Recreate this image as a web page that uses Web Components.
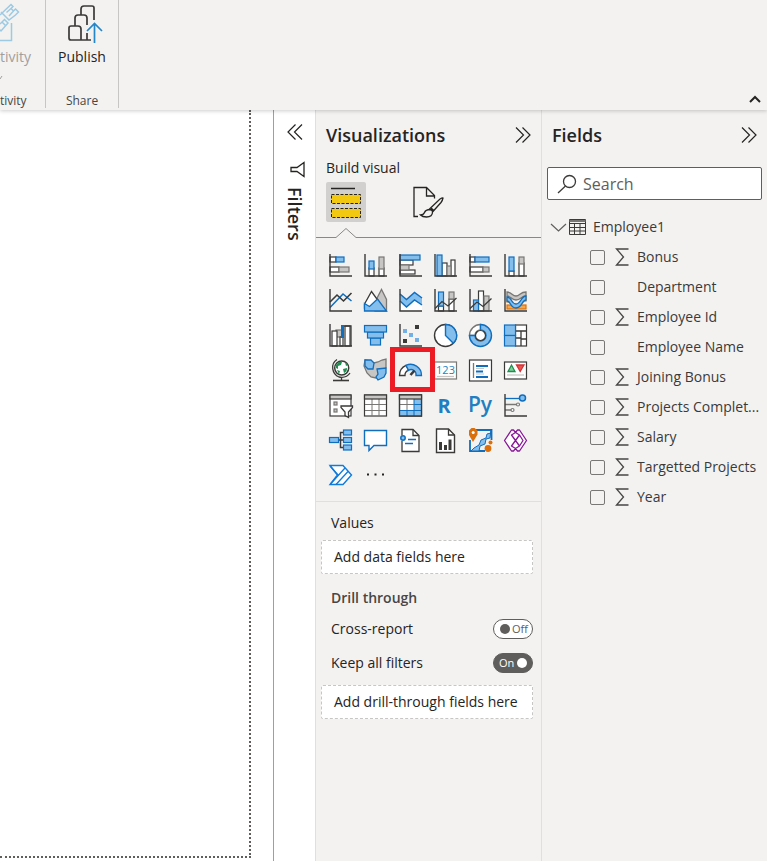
<!DOCTYPE html>
<html lang="en">
<head>
<meta charset="utf-8">
<title>Report editor</title>
<style>
html, body { height: 100%; }
body { margin: 0; font: 14px/20px "Open Sans", "Noto Sans", sans-serif; color: #252423; background: #fff; }
</style>
</head>
<body>
<report-editor></report-editor>
<script>
const define = (name, html, setup) => {
  const t = document.createElement('template');
  t.innerHTML = `<style>
    *{box-sizing:border-box}
    button{font:inherit;color:inherit;background:none;border:0;padding:0;margin:0;display:block}
    h2,h3,p{margin:0;font-weight:inherit;font-size:inherit}
    svg{display:block;overflow:visible;fill:none}
  </style>` + html;
  customElements.define(name, class extends HTMLElement {
    constructor() {
      super();
      this.attachShadow({ mode: 'open' }).append(t.content.cloneNode(true));
    }
    connectedCallback() { if (setup) setup(this.shadowRoot, this); }
  });
};

/* Palette shared by the visual icons */
const D = '#3b3a39', G = '#797775', B = '#106ebe', F = '#83beec', GF = '#c8c6c4';
const axis = `<path d="M2 1v22h22" stroke="${D}" stroke-width="1.4"/>`;
const r = (x, y, w, h, f = '#fff', s = D) => `<rect x="${x}" y="${y}" width="${w}" height="${h}" fill="${f}" stroke="${s}" stroke-width="1.2"/>`;
const blue = (x, y, w, h) => r(x, y, w, h, F, B);
const grey = (x, y, w, h) => r(x, y, w, h, GF, G);
const p = (d, s = D, f = 'none', w = 1.3) => `<path d="${d}" stroke="${s}" fill="${f}" stroke-width="${w}"/>`;
const c = (x, y, q, s = D, f = 'none', w = 1.2) => `<circle cx="${x}" cy="${y}" r="${q}" stroke="${s}" fill="${f}" stroke-width="${w}"/>`;
const sq = (x, y, f) => `<rect x="${x - 2}" y="${y - 2}" width="4" height="4" fill="${f}"/>`;
const O = '#d9700d', P = '#881798', A = '#0f7bdc';

const visuals = [
  ['Stacked bar chart', r(2,4,6,5)+blue(8,4,8,5)+r(2,14,9,5)+grey(11,14,10,5)+axis],
  ['Stacked column chart', r(6,15,5,8)+blue(6,8,5,8)+r(16,15,5,8)+grey(16,4,5,12)+axis],
  ['Clustered bar chart', r(2,7,13,5)+r(2,17,15,4)+grey(2,12,9,5)+blue(2,2,20,5)+axis],
  ['Clustered column chart', r(9,10,5,13)+r(18,7,4,16)+grey(14,13,4,10)+blue(4,2,5,21)+axis],
  ['100% stacked bar chart', r(2,4,5,5)+blue(7,4,14,5)+r(2,14,13,5)+grey(15,14,6,5)+axis],
  ['100% stacked column chart', r(6,18,5,5)+blue(6,4,5,14)+r(16,10,5,13)+grey(16,4,5,7)+axis],

  ['Line chart', p('M2 19.5L15 6l8.5 7',B,'none',1.5)+p('M2 14L9 7l6.500 6L23.500 5',D,'none',1.6)+axis],
  ['Area chart', p('M12 14l6.500-12.500 5 10V23H12z',G,GF)+p('M1.500 16L8.500 3.500l8 11V20h-15z',D,'#fff')+p('M1.500 15.500l5 3 8-7.500 9 12h-22z',B,F)],
  ['Stacked area chart', p('M2 13l6.500 6L16.500 12 24 17v6H2z','none','#fff')+p('M2 6l6.500 5.500 8-7L24 10v7l-7.500-5-8 7L2 13z','none',F)+p('M2 6l6.500 5.500 8-7L24 10M2 13l6.500 6 8-7L24 17',B,'none',1.5)+axis],
  ['Line and stacked column chart', r(5.5,18,5,5)+blue(5.5,4,5,14)+r(16,11,5,12)+grey(16,4,5,7)+p('M2 20.500L9 13.500l6 4.500 8.500-8')+axis],
  ['Line and clustered column chart', r(10.5,3,5,20)+grey(16,8,5,15)+blue(5.5,12,5,11)+p('M2 20.500L9 14l6 4.500 8.500-8')+axis],
  ['Ribbon chart', r(4,10,4,4,'#f7a548',O)+r(19,9,4,4,'#f7a548',O)+r(4,17,19,4,'#f7a548',O)+p('M4 4c5 0 5 4 9 4s4-4 10-4v4c-5 0-5 4-10 4s-5-4-9-4z',G,GF)+p('M4 9c5 0 4 7 9 7s5-8 10-8v4c-4 0-4 8-10 8S8 13 4 13z',B,F)+axis],

  ['Waterfall chart', grey(8,7,6,7)+r(4,8,5,15)+r(12,14,3,9)+r(17,3,5,20)+`<path d="M13 2h3v13h-3z" fill="${B}"/>`+p('M16 3h7v20')+axis],
  ['Funnel', blue(7.5,15,10,7)+blue(4.5,9,16,6)+blue(1.5,2.5,22,6.5)],
  ['Scatter chart', sq(19,4,D)+sq(7,8,'#71afe5')+sq(13,12,'#71afe5')+sq(7,18,D)+sq(19,17,'#71afe5')+axis],
  ['Pie chart', c(12.5,12.5,11,D,'#fff',1.4)+p('M12.500 12.500v-11a11 11 0 0 1 7.800 18.800z',B,F,1.4)],
  ['Donut chart', p('M1.500 12.500a11 11 0 0 1 11-11v5.500a5.500 5.500 0 0 0-5.500 5.500z',G,'#fff',1.4)+p('M12.500 1.500a11 11 0 1 1-11 11h5.500a5.500 5.500 0 1 0 5.500-5.500z',B,F,1.4)+c(12.5,12.5,5,D,'#fff')],
  ['Treemap', r(12.5,2,11,21)+p('M12.500 8h11M18 8v15M18 16h5.500M12.500 15h5.500')+blue(1.5,2,11,10.5)+blue(1.5,12.5,11,10.5)],

  ['Map', c(13.7,10,7,D,'#fff',1.5)+`<path d="M8 7c2-3 4-4 6-3l-1 3-3 1v3l-2-1zM15 11l4-1c0 3-1 4-3 5zM17 4l3 3-2 1zM9 12l3 1-1 3z" fill="#218d51"/>`+p('M9 1.500C2 6 4 16 11 19c5 1 9-1 11-4M13.500 19v3')+p('M5 22.500h16',D,'none',1.6)],
  ['Filled map', p('M2 2l6 1 3 2 4-1 4-2 4-1v8l-1 5-3 3-6 3-5-1-4-4-3-7z',G,GF)+p('M2 2l6 0 3 3-1 6H5L2 8z',B,F)+p('M14 11l9-1v5l-2 4-6 3-2-3 2-3z',B,F)],
  ['Gauge', p('M1.500 17.500a11 11 0 0 1 6.500-10.200l2.500 5a5 5 0 0 0-3.500 5.200z',D,'#fff')+p('M8 7.300A11 11 0 0 1 23.500 17.500h-5.500a5 5 0 0 0-7.500-5.200z',B,F)+p('M12.500 17l4-4.500',D,'none',2.6)],
  ['Card', r(1.5,4,22,17,'#fff',G)+`<text x="12.500" y="15.500" text-anchor="middle" font-size="11" fill="#1f7fc1">123</text>`+p('M4 18.500h17',GF)],
  ['Multi-row card', r(1.5,2,22,21)+p('M5.500 5v15',G)+p('M8 8h12M8 19h12M8 13.500h7',B,'none',2)+p('M8 10.500h8M8 16h8',GF,'none',1)],
  ['KPI', r(1.5,4,22,17)+p('M5 13.500l3.500-6.500L12 13.500z','#218d51','#7fcf98')+p('M13.500 7h7.500l-3.800 6.500z','#d13438','#ef5350')+p('M4 17h17',GF)],

  ['Slicer', r(2,2,21,21)+r(2,2,21,4,GF)+r(6,9,3,3,GF,G)+r(6,16,3,3,GF,G)+p('M13 13h11.500v1.500l-4 4.500v5.500l-3.500-2v-3.500l-4-4.500z',D,'#fff')],
  ['Table', r(1.5,2,22,21)+p('M9 6v17M16 6v17M2 11.500h21M2 17.500h21',G,'none',1)+r(1.5,2,22,4,GF)],
  ['Matrix', r(1.5,2,22,21)+`<path d="M2 17.500h14V6h7.500v17H2z" fill="${F}"/>`+p('M9 6v11M2 11.500h14',G,'none',1)+p('M9 17.500V23M16 6v17M16 11.500h7.500M2 17.500h21',B,'none',1)+p('M1.500 2v21h22V2z')+r(1.5,2,22,4,GF)],
  ['R script visual', `<text x="11" y="20" text-anchor="middle" font-size="20" font-weight="700" fill="#1f7fc1">R</text>`],
  ['Python visual', `<text x="12" y="19" text-anchor="middle" font-size="21" font-weight="600" fill="#1f7fc1">Py</text>`],
  ['Key influencers', p('M2 5.500h14',B)+p('M2 11.500h12M2 17h7',G)+c(19.5,5,3,B,F,1.5)+c(15,11.5,1.5,G,'#fff')+c(9.5,17,1.5,G,'#fff')+axis],

  ['Decomposition tree', p('M10 12h6M16 4.500h-3.500v15H16',D,'none',1.5)+blue(1.5,9.5,9,5)+blue(15.5,2,8,5)+blue(15.5,9.5,8,5)+blue(15.5,17,8,5)],
  ['Q&A', p('M1.500 2.500h22v15H11L6 22.500v-5H1.500z',B,'#fff',1.4)],
  ['Smart narrative', p('M4 7.500V1.500h11l6 6v16H4V13',D,'#fff')+p('M15 1.500v6h6')+c(5,10,2.2,B,F,1.5)+p('M10 11.500h8M7 15.500h8',B)],
  ['Paginated report', p('M3.500 1h12L21.500 7v17.500h-18z',D,'#fff',1.4)+p('M15.500 1v6h6')+`<path d="M6 14h3v8H6zM11 17h3v5h-3zM15.500 11.500h3V22h-3z" fill="${D}"/>`],
  ['ArcGIS map', p('M8 2h15.500v10M2 12v11h15',B,'none',1.8)+p('M23 2v3l-4 1-1 4-5 2-2 5-5 3-3 3h8l1-5 5-2 1-5 4-1z',B,F,1)+p('M3.500 0h3l3 2.500v4L5 14 1 7V2.500z','none',O)+c(5.2,4.5,1.5,'none','#fff')+c(20,20.5,3.4,'none',O)+c(22.5,14.5,2,'none',O)],
  ['Power Apps', p('M9.500 1.500h6L23.500 12.500l-7.500 10.500H9.500L1.500 12.500z','none','#fff')+`<g stroke="${P}" stroke-width="1.3" stroke-linejoin="round"><path d="M12.500 4.500L10.500 2H8.500L1.500 12.500 8.500 23h2l2-2.500M12.500 4.500L14.500 2h2l7 10.500-7 10.500h-2l-2-2.500M8.500 7l4-2.500 4 2.500-8 11 4 2.500 4-2.500-8-11zM16.500 7l3.500 5.500-3.500 5.500"/></g>`],

  ['Power Automate', p('M2 2.500h13l8.500 9.500L15 21.500H2L9.500 12z',A,'#fff',1.4)+p('M2.500 21L17 5M8 21.500L20 8.500M2 3l8 9',A)],
  ['Get more visuals', '<path d="M4 10.500h2v2H4zM11.500 10.500h2v2h-2zM19 10.500h2v2h-2z" fill="#252423"/>'],
];

define('chevrons-icon', `<style>:host{display:block}:host([left]) svg{transform:rotate(180deg)}</style>
<svg width="16" height="16" stroke="#252423" stroke-width="1.2"><path d="M1 .5L8.500 8 1 15.500M7.500 .5L15 8l-7.500 7.500"/></svg>`);

define('ribbon-item', `<style>
:host{display:flex;flex-direction:column;justify-content:space-between;align-items:center;border-right:1px solid #c8c6c4;height:108px;white-space:nowrap}
button{display:flex;flex-direction:column;align-items:inherit}
.group{font-size:12px;line-height:14px;color:#484644}
:host([start]){align-items:flex-start}
:host([start]) button{color:#a19f9d}
</style><button><slot name="icon"></slot><slot></slot><slot name="more"></slot></button><span class="group"><slot name="group"></slot></span>`);

define('top-ribbon', `<style>
:host{display:flex;position:relative;z-index:2;height:110px;background:#f3f2f1;box-shadow:0 1px 4px #0003}
.sens{width:46px}
.pub{width:73px}
[slot=icon]{margin:4px 0 5px}
.grow{flex:1}
.collapse{align-self:flex-end;margin:0 6px 7px 0}
</style>
<ribbon-item class="sens" start>
 <svg slot="icon" width="20" height="38" stroke="#9ccae3" stroke-width="1.5"><path d="M0 11L11 .5l2 2-2 2 2.500 2.500 2-2 3 3-3 3L9 16 1 8M11 4.500L6.500 8.500M13.500 7L9 12M0 20l4.500-4.500L8 19 1 27l-3-3M2 18l3.500 3.500M11.500 19v17.500H0"/></svg>
 tivity
 <svg slot="more" width="4" height="20"><path d="M-3 9l3 3 2-3" stroke="#a19f9d"/></svg>
 <span slot="group">tivity</span>
</ribbon-item>
<ribbon-item class="pub">
 <svg slot="icon" width="36" height="38" stroke="#3b3a39" stroke-width="1.700"><path d="M27 36H7q-2 0-2-2V24q0-2 2-2h7q3 0 3 3v11M11 22v-8q0-3 3-3h6q3 0 3 3v7M23 29v7M17 11V5q0-3 3-3h8q2 0 2 2v12"/><path d="M30.500 39V20M23 27l7.500-7.500L38 27" stroke="#2286c9"/></svg>
 Publish
 <span slot="group">Share</span>
</ribbon-item>
<span class="grow"></span>
<button class="collapse" aria-label="Collapse ribbon"><svg width="12" height="8" stroke="#252423" stroke-width="2"><path d="M1 7l5-5 5 5"/></svg></button>`);

define('report-canvas', `<style>
:host{display:flex;background:#fff;padding:0 22px 3px 0}
div{flex:1;border:2px dotted #605e5c;border-width:0 2px 2px 0}
</style><div></div>`);

define('filters-pane', `<style>
:host{display:flex;flex-direction:column;align-items:center;background:#fff;border-left:1px solid #a19f9d;border-right:1px solid #e1dfdd;padding-top:14px}
h2{writing-mode:vertical-rl;font-size:18px;line-height:20px;font-weight:600;margin-top:9px}
.f{margin:21px 0 0 5px}
</style>
<button aria-label="Expand filters"><chevrons-icon left></chevrons-icon></button>
<svg class="f" width="16" height="17" stroke="#252423" stroke-width="1.300"><path d="M15 1.500v14L8 10.500H2v-4h6z"/></svg>
<h2>Filters</h2>`);

define('pane-title', `<style>
:host{display:flex;justify-content:space-between;align-items:center}
h2{font-size:18px;line-height:24px;font-weight:600}
</style><h2><slot></slot></h2><button aria-label="Collapse pane"><chevrons-icon></chevrons-icon></button>`);

define('visual-gallery', `<style>
:host{display:grid;grid-template-columns:repeat(6,35px);grid-auto-rows:35px;padding:9px 0 9px 6px}
button{display:grid;place-items:center;position:relative}
.marked::after{content:"";position:absolute;z-index:1;inset:-5px -8px -5px -2px;border:5px solid #ed1c24}
</style>`, root => {
  root.innerHTML += visuals.map(([name, art]) =>
    `<button aria-label="${name.replace('&', '&amp;')}"${name === 'Gauge' ? ' class="marked"' : ''}><svg width="24" height="24">${art}</svg></button>`).join('');
});

define('drop-well', `<style>:host{display:block;background:#fff;border:1px dashed #c8c6c4;border-radius:2px;padding:6px 12px;white-space:nowrap}</style><slot></slot>`);

define('toggle-row', `<style>
:host{display:block}
label{display:flex;justify-content:space-between;align-items:center;height:20px}
.sw{position:relative;display:flex;align-items:center;justify-content:space-between;width:40px;height:20px;border:1px solid #605e5c;border-radius:10px;background:#fff;color:#605e5c;font-size:11px;line-height:18px;padding:0 4px 0 6px}
i{width:10px;height:10px;border-radius:5px;background:#605e5c}
input{position:absolute;inset:0;margin:0;opacity:0;width:100%;height:100%}
:host([on]) .sw{background:#605e5c;color:#fff;flex-direction:row-reverse;padding:0 5px}
:host([on]) i{background:#fff}
</style><label><slot></slot><span class="sw"><input type="checkbox" role="switch"><i></i><span class="t"></span></span></label>`,
(root, el) => {
  const on = el.hasAttribute('on');
  root.querySelector('input').checked = on;
  root.querySelector('.t').textContent = on ? 'On' : 'Off';
});

define('visualizations-pane', `<style>
:host{display:block;background:#f3f2f1;border-right:1px solid #e1dfdd}
header{padding:13px 10px 0}
h3{margin-top:11px}
.tabs{display:flex;gap:42px;margin-top:4px}
.tabs button{width:40px;height:40px;display:grid;place-items:center;border-radius:2px}
.tabs .on{background:#d2d0ce}
.notch{height:16px;display:flex;align-items:flex-end}
.notch::before,.notch::after{content:"";border-bottom:1px solid #8a8886}
.notch::before{width:20px}.notch::after{flex:1}
.fields{border-top:1px solid #e1dfdd;padding:11px 8px 0 5px}
.fields p,toggle-row{margin-left:10px}
.d{font-weight:600;color:#484644}
</style>
<header>
 <pane-title>Visualizations</pane-title>
 <h3>Build visual</h3>
 <div class="tabs">
  <button class="on" aria-label="Build visual"><svg width="30" height="31"><path d="M0 1.500h24" stroke="#252423" stroke-width="1.500"/><path d="M.5 7.500h29v9H.5zM.5 21.500h29v9H.5z" fill="#f2c811" stroke="#252423" stroke-dasharray="3 1.500"/></svg></button>
  <button aria-label="Format visual"><svg width="32" height="32" stroke="#252423" stroke-width="1.300"><path d="M6 30.500H2v-29h12.500l8 8v3M14.500 1.500v8.500h8"/><path d="M17 23.500l11-10.500q2.500-1.500 3-1-.5 2.500-2 4.500L20.500 26M17 23.500q3.500 0 3.500 2.500 0 5-6 5-4 0-6-2 3 0 4-2.500t4.500-3zM19 22l3 2.500"/></svg></button>
 </div>
</header>
<div class="notch"><svg width="20" height="10" stroke="#8a8886"><path d="M0 9.500L10 .5l10 9"/></svg></div>
<visual-gallery></visual-gallery>
<div class="fields">
 <p>Values</p>
 <drop-well style="margin-top:7px">Add data fields here</drop-well>
 <p class="d" style="margin-top:14px">Drill through</p>
 <toggle-row style="margin-top:11px">Cross-report</toggle-row>
 <toggle-row on style="margin-top:14px">Keep all filters</toggle-row>
 <drop-well style="margin-top:12px">Add drill-through fields here</drop-well>
</div>`);

define('field-row', `<style>
:host{display:block}
label{display:grid;grid-template-columns:16px 13px 1fr;column-gap:9px;align-items:center;height:30px;white-space:nowrap;color:#3b3a39}
input{appearance:none;width:15px;height:15px;margin:0;border:1px solid #797775;border-radius:2px}
svg{visibility:hidden}
:host([sum]) svg{visibility:visible}
</style><label><input type="checkbox"><svg width="14" height="18" stroke="#484644" stroke-width="1.300"><path d="M13.500 1H1.500L8.500 9l-7 8h12"/></svg><span><slot></slot></span></label>`);

define('fields-pane', `<style>
:host{display:block;background:#f3f2f1}
pane-title{padding:13px 10px 0}
.search{display:flex;align-items:center;gap:6px;margin:20px 5px 0;height:33px;padding:0 9px;background:#fff;border:1px solid #605e5c;border-radius:2px}
input{font:inherit;font-size:16px;line-height:24px;border:0;outline:0;padding:0;min-width:0;flex:1;background:none}
input::placeholder{color:#605e5c;opacity:1}
.table{display:flex;align-items:center;gap:3px;height:30px;margin:12px 0 0 9px;color:#3b3a39}
.table span{margin-left:4px}
field-row{margin-left:48px}
</style>
<pane-title>Fields</pane-title>
<label class="search"><svg width="20" height="20" stroke="#3b3a39" stroke-width="1.300"><circle cx="12.500" cy="7.500" r="6"/><path d="M8.500 12L1 19"/></svg><input placeholder="Search" aria-label="Search"></label>
<button class="table"><svg width="15" height="16" stroke="#605e5c" stroke-width="1.200"><path d="M0 5l7.500 7L15 5"/></svg><svg width="17" height="16" stroke="#3b3a39"><path d="M.5 .5h16v15H.5zM.5 4.500h16M.5 8.500h16M.5 12h16M5.500 4v12M11 4v12"/><path d="M.5 2h16" stroke="#797775" stroke-width="2"/></svg><span>Employee1</span></button>
<field-row sum>Bonus</field-row>
<field-row>Department</field-row>
<field-row sum>Employee Id</field-row>
<field-row>Employee Name</field-row>
<field-row sum>Joining Bonus</field-row>
<field-row sum>Projects Complet...</field-row>
<field-row sum>Salary</field-row>
<field-row sum>Targetted Projects</field-row>
<field-row sum>Year</field-row>`);

define('report-editor', `<style>
:host{display:flex;flex-direction:column;min-height:100vh}
main{flex:1;display:grid;grid-template-columns:minmax(0,1fr) 43px 226px 225px}
</style>
<top-ribbon></top-ribbon>
<main><report-canvas></report-canvas><filters-pane></filters-pane><visualizations-pane></visualizations-pane><fields-pane></fields-pane></main>`);
</script>
</body>
</html>
